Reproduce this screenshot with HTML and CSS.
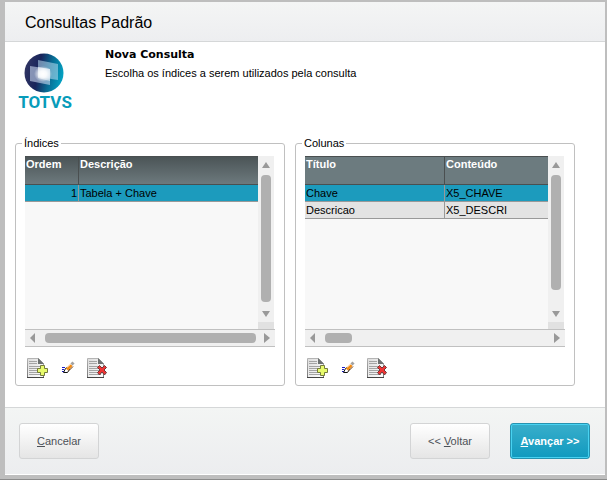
FILE: index.html
```html
<!DOCTYPE html>
<html lang="pt-BR">
<head>
<meta charset="utf-8">
<title>Consultas Padrão</title>
<link rel="stylesheet" href="styles.css">
</head>
<body>
<svg class="sprites" aria-hidden="true">
  <defs>
    <linearGradient id="sheet" x1="0" y1="0" x2="1" y2="1"><stop offset="0" stop-color="#dcdcdc"/><stop offset="1" stop-color="#fff"/></linearGradient>
    <linearGradient id="edge" x1="0" y1="0" x2="0" y2="1"><stop offset="0" stop-color="#b4b4b4"/><stop offset="1" stop-color="#777"/></linearGradient>
  </defs>
  <symbol id="page" viewBox="0 0 22 22">
    <path d="M.5 1.500h11l5 5v14h-16z" fill="url(#sheet)" stroke="url(#edge)"/>
    <path d="M11 1l6 6h-6z" fill="#6c7070"/>
    <path d="M2 4.500h8M2 6.500h8M2 9.500h12M2 11.500h12M2 13.500h12M2 15.500h12M2 17.500h12" stroke="#a4a4a4"/>
    <path d="M0 20.500h17" stroke="#444"/>
  </symbol>
  <symbol id="add" viewBox="0 0 22 22">
    <use href="#page" width="22" height="22"/>
    <path d="M13.500 8.500h4v3h3v4h-3v3h-4v-3h-3v-4h3z" fill="#e8fb6c" stroke="#747b3c"/>
  </symbol>
  <symbol id="remove" viewBox="0 0 22 22">
    <use href="#page" width="22" height="22"/>
    <path d="M10.500 10.500l2-2 2.500 2.500 2.500-2.500 2 2-2.500 2.500 2.500 2.500-2 2.500-2.500-3-2.500 3-2-2.500 2.500-2.500z" fill="#ee3434" stroke="#6b3b3b"/>
  </symbol>
  <symbol id="edit" viewBox="0 0 22 22">
    <path d="M5 10.500h3M5 12.500h2M5 14.500h3" stroke="#1616c8"/>
    <path d="M6.500 15.500l2-4 2-1 2 2-2 3z" fill="#fff" stroke="#111"/>
    <path d="M10 12.500l4.500-4.500" stroke="#f58a10" stroke-width="3"/>
    <path d="M10 10.500l4-3.500" stroke="#ffd4a0"/>
    <path d="M12 13.500l4-4" stroke="#6a3508"/>
    <path d="M14.500 7.500l2-2" stroke="#a0a0a0" stroke-width="3"/>
  </symbol>
</svg>
<div class="window">
  <header class="titlebar"><h1>Consultas Padrão</h1></header>
  <main>
    <section class="intro">
      <svg class="logo" viewBox="0 0 56 58" role="img" aria-label="TOTVS">
        <defs>
          <linearGradient id="ball" x1="0" y1=".4" x2="1" y2=".6"><stop offset="0" stop-color="#303563"/><stop offset=".35" stop-color="#18245b"/><stop offset=".65" stop-color="#086b93"/><stop offset="1" stop-color="#03a5c5"/></linearGradient>
          <radialGradient id="glow"><stop offset="0" stop-color="#fff"/><stop offset=".4" stop-color="#fff" stop-opacity=".85"/><stop offset="1" stop-color="#fff" stop-opacity="0"/></radialGradient>
        </defs>
        <circle cx="27" cy="20" r="19.500" fill="url(#ball)"/>
        <path d="M21 7l20 4v16l-20-3z" fill="#b8dcf0" fill-opacity=".55"/>
        <path d="M13 13l20 3v16l-20-4z" fill="#c9d9f0" fill-opacity=".6"/>
        <path d="M21 14l12 2v12l-12-3z" fill="#fff" fill-opacity=".5"/>
        <ellipse cx="26" cy="21" rx="9" ry="8" fill="url(#glow)"/>
        <text x="28" y="55" text-anchor="middle" class="logo-text">TOTVS</text>
      </svg>
      <div>
        <h2>Nova Consulta</h2>
        <p>Escolha os índices a serem utilizados pela consulta</p>
      </div>
    </section>
    <div class="panels">
      <fieldset>
        <legend>Índices</legend>
        <div class="grid">
          <div class="body">
            <table class="indices">
              <thead><tr><th class="order">Ordem</th><th>Descrição</th></tr></thead>
              <tbody><tr class="selected"><td class="number">1</td><td>Tabela + Chave</td></tr></tbody>
            </table>
          </div>
          <div class="vscroll"><i class="up"></i><div class="track"><div class="thumb long"></div></div><i class="down"></i></div>
          <div class="hscroll"><i class="left"></i><div class="track"><div class="thumb wide"></div></div><i class="right"></i></div>
        </div>
        <div class="tools">
          <button aria-label="Incluir"><svg><use href="#add"/></svg></button>
          <button aria-label="Editar"><svg><use href="#edit"/></svg></button>
          <button aria-label="Excluir"><svg><use href="#remove"/></svg></button>
        </div>
      </fieldset>
      <fieldset>
        <legend>Colunas</legend>
        <div class="grid">
          <div class="body">
            <table class="columns">
              <thead><tr><th class="title">Título</th><th>Conteúdo</th></tr></thead>
              <tbody>
                <tr class="selected"><td>Chave</td><td>X5_CHAVE</td></tr>
                <tr><td>Descricao</td><td>X5_DESCRI</td></tr>
              </tbody>
            </table>
          </div>
          <div class="vscroll"><i class="up"></i><div class="track"><div class="thumb medium"></div></div><i class="down"></i></div>
          <div class="hscroll"><i class="left"></i><div class="track"><div class="thumb narrow"></div></div><i class="right"></i></div>
        </div>
        <div class="tools">
          <button aria-label="Incluir"><svg><use href="#add"/></svg></button>
          <button aria-label="Editar"><svg><use href="#edit"/></svg></button>
          <button aria-label="Excluir"><svg><use href="#remove"/></svg></button>
        </div>
      </fieldset>
    </div>
  </main>
  <footer>
    <button class="button"><span><u>C</u>ancelar</span></button>
    <button class="button back"><span>&lt;&lt; <u>V</u>oltar</span></button>
    <button class="button primary"><span><u>A</u>vançar &gt;&gt;</span></button>
  </footer>
</div>
</body>
</html>
```
FILE: styles.css
```css
* { box-sizing: border-box; }

body {
  display: flex;
  flex-direction: column;
  min-height: 100vh;
  margin: 0;
  border-bottom: 1px solid #8c8c8c;
  background: #bebebe;
  color: #000;
  font: 11px/14px "Liberation Sans", Arial, sans-serif;
}

h1, h2, p { margin: 0; }
button { font: inherit; cursor: pointer; }
.sprites { position: absolute; width: 0; height: 0; }

.window {
  display: flex;
  flex: 1;
  flex-direction: column;
  border: solid #bebebe;
  border-width: 2px 2px 4px 5px;
  background: #fff;
}

.titlebar {
  padding: 11px 20px 8px;
  border-bottom: 1px solid #d5d7d8;
  background: linear-gradient(#f4f5f5, #edeef0);
}
.titlebar h1 { font-size: 16px; font-weight: normal; line-height: 20px; }

main { flex: 1; }

.intro { display: flex; gap: 32px; padding: 6px 12px 0; }
.intro h2 { font: bold 11px/14px "DejaVu Sans", Verdana, sans-serif; }
.intro p { margin-top: 4px; }
.logo { flex: none; width: 56px; height: 58px; margin-top: 5px; }
.logo-text { font: bold 17px Roboto, sans-serif; fill: #079cba; }

.panels {
  display: grid;
  grid-template-columns: 27fr 28fr;
  gap: 10px;
  padding: 25px 30px 20px 10px;
}

fieldset {
  min-width: 0;
  margin: 0;
  padding: 6px 9px;
  border: 1px solid #c0c0c0;
  border-radius: 3px;
}
legend { margin-left: -3px; padding: 0 2px; }

.grid { display: grid; grid-template-columns: 1fr 17px; grid-template-rows: 173px 18px; }
.body { overflow: hidden; background: #f8f8f8; }

table { width: 100%; border-collapse: separate; border-spacing: 0; table-layout: fixed; }
th, td { padding: 0 1px; border-right: 1px solid #999; border-bottom: 1px solid #999; text-align: left; white-space: nowrap; }
th {
  height: 29px;
  border-top: 1px solid #5d6566;
  border-color: #4a4f50;
  color: #fff;
  vertical-align: top;
}
td { height: 17px; background: #e3e3e3; line-height: 16px; }
th:last-child, td:last-child { border-right: 0; }
thead tr { background: #6c7b7f; }
.indices thead tr { background: linear-gradient(#4a5355, #6e7b7f); }
.selected td { background: #1c9bbd; }
.order { width: 54px; }
.title { width: 140px; }
.number { text-align: right; }

.vscroll, .hscroll { display: flex; align-items: center; background: #f0f0f0; }
.vscroll { flex-direction: column; margin-right: 1px; padding: 6px 0 5px; border-bottom: 7px solid #e1e1e1; }
.hscroll { grid-column: 1 / -1; padding: 0 5px; border: solid #c0c0c0; border-width: 1px 0; }
.track { flex: 1; min-width: 0; min-height: 0; }
.vscroll .track { width: 10px; margin: 7px 0 2px; }
.hscroll .track { height: 10px; margin: 0 8px 0 10px; }
.thumb { width: 100%; height: 100%; border-radius: 4px; background: #b0b0b0; }
.long { height: 95%; }
.medium { height: 86%; }
.wide { width: 100%; }
.narrow { width: 12%; }

.up, .down { flex: none; border: solid transparent; border-width: 0 4px; }
.up { border-bottom: 6px solid #999; }
.down { border-top: 6px solid #999; }
.left, .right { flex: none; border: solid transparent; border-width: 5px 0; }
.left { border-right: 5px solid #999; }
.right { border-left: 6px solid #999; }

.tools { display: flex; gap: 8px; padding: 10px 2px 0; }
.tools button { width: 22px; height: 22px; padding: 0; border: 0; background: none; }
.tools svg { display: block; width: 22px; height: 22px; }

footer {
  display: flex;
  gap: 20px;
  padding: 15px 15px 15px 14px;
  border-bottom: 1px solid #fff;
  border-top: 1px solid #d5d7d8;
  background: linear-gradient(#f3f5f4, #ecedef);
}
.button {
  width: 80px;
  height: 36px;
  padding: 0;
  border: 1px solid #d3d4d5;
  border-radius: 3px;
  background: linear-gradient(#fff, #e5e5e5);
  color: #4d5157;
}
.back { margin-left: auto; }
.primary {
  border-color: #2693b1;
  background: linear-gradient(#39aecb, #109abf);
  box-shadow: inset 0 0 0 1px #48d2f1;
  color: #fff;
  font-weight: bold;
}
```
